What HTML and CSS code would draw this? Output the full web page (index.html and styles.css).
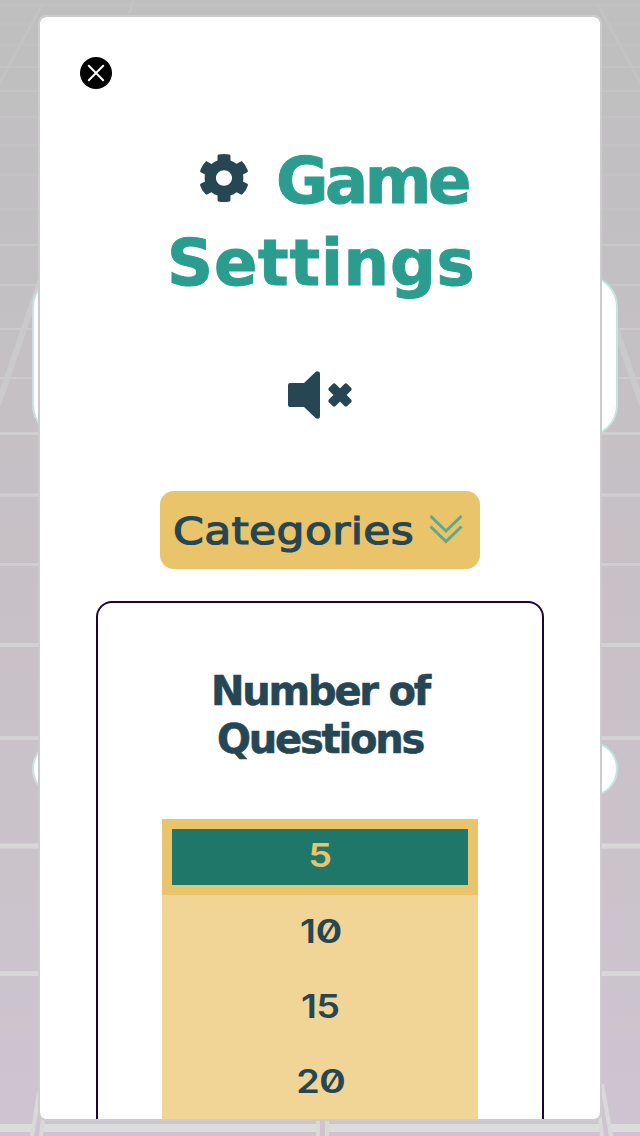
FILE: index.html
```html
<!DOCTYPE html>
<html lang="en">
<head>
<meta charset="utf-8">
<title>Game Settings</title>
<link rel="stylesheet" href="styles.css">
</head>
<body>
<svg class="backdrop" viewBox="0 0 640 1136" aria-hidden="true">
  <defs>
    <linearGradient id="sky" x1="0" y1="0" x2="0" y2="1">
      <stop offset="0" stop-color="#bebfbe"/><stop offset=".1" stop-color="#c1bfc1"/><stop offset=".25" stop-color="#c3c0c3"/>
      <stop offset=".6" stop-color="#c8c1c7"/><stop offset=".85" stop-color="#cbc4cc"/><stop offset="1" stop-color="#cfc3d1"/>
    </linearGradient>
  </defs>
  <rect width="640" height="1136" fill="url(#sky)"/>
  <g fill="none" stroke="#c4c3c4" stroke-width="2">
    <path stroke="#c1c1c1" d="M0 5H640M0 24H640M0 45H640"/>
    <path d="M0 67H640M0 91H640M0 117H640M0 145H640M0 175H640M0 209H640"/>
    <path stroke="#c8c7c8" d="M0 245H640M0 285H640"/>
    <path stroke="#c2c4c3" stroke-width="3" d="M43 3L-2 86M597 3L642 86M133 0L128 18"/>
    <path stroke="#cccbcc" d="M0 329H640M0 378H640"/>
    <path stroke="#cacaca" stroke-width="6" d="M43 273L-2 405M597 273L642 405"/>
    <path stroke="#cfcfcf" stroke-width="3" d="M0 433.500H640M0 495H640M0 564.500H640"/>
    <path stroke="#d3d2d3" stroke-width="4" d="M0 645H640M0 738H640"/>
    <path stroke="#d8d7d8" stroke-width="5" d="M0 846H640M0 973.500H640"/>
    <path stroke="#dcdcdc" stroke-width="8" d="M0 1128H32M42 1128H317M327 1128H601M611 1128H640"/>
    <path stroke="#dad9da" stroke-width="4" d="M39 1092L32 1136M44 1110L41 1136M318 1121V1136M327 1121V1136M599 1110L602 1136M602 1084L611 1136"/>
  </g>
  <g fill="#fff" stroke="#c5e3df" stroke-width="2">
    <rect x="33" y="276" width="584" height="160" rx="31"/>
    <rect x="33" y="742" width="584" height="54" rx="27"/>
  </g>
</svg>
<main class="modal">
  <button class="close" aria-label="Close">
    <svg viewBox="0 0 32 32"><circle cx="16" cy="16" r="16"/><path d="M8.800 8.800L23.200 23.200M23.200 8.800L8.800 23.200" stroke="#fff" stroke-width="2" stroke-linecap="round"/></svg>
  </button>
  <h1 class="title">
    <span class="title-row">
      <svg class="gear" viewBox="18 8 476 496" preserveAspectRatio="none"><path d="M487.400 315.700l-42.600-24.600c4.300-23.200 4.300-47 0-70.200l42.600-24.600c4.900-2.800 7.100-8.600 5.500-14-11.100-35.600-30-67.800-54.700-94.600-3.800-4.100-10-5.100-14.800-2.300L380.800 110c-17.900-15.400-38.500-27.300-60.800-35.100V25.800c0-5.600-3.900-10.500-9.400-11.700-36.700-8.200-74.300-7.800-109.200 0-5.500 1.200-9.400 6.100-9.400 11.700V75c-22.200 7.900-42.800 19.800-60.800 35.100L88.700 85.500c-4.900-2.800-11-1.900-14.800 2.300-24.700 26.700-43.600 58.900-54.700 94.600-1.700 5.400.6 11.200 5.500 14L67.300 221c-4.300 23.200-4.300 47 0 70.200l-42.600 24.600c-4.900 2.800-7.100 8.600-5.500 14 11.100 35.600 30 67.800 54.700 94.600 3.800 4.100 10 5.100 14.800 2.300l42.600-24.600c17.900 15.400 38.500 27.300 60.800 35.100v49.200c0 5.600 3.900 10.500 9.400 11.700 36.700 8.200 74.300 7.800 109.200 0 5.500-1.200 9.400-6.100 9.400-11.700v-49.200c22.200-7.900 42.800-19.800 60.800-35.100l42.600 24.600c4.900 2.800 11 1.900 14.800-2.300 24.700-26.700 43.600-58.900 54.700-94.600 1.500-5.500-.7-11.300-5.600-14.100zM256 336c-44.100 0-80-35.900-80-80s35.900-80 80-80 80 35.900 80 80-35.900 80-80 80z"/></svg>
      <span class="game">Game</span>
    </span>
    <span class="settings">Settings</span>
  </h1>
  <button class="mute" aria-label="Sound off">
    <svg viewBox="0 0 64 48"><path d="M2 12H16L27.500 .9Q29 -.4 31 .7Q32 1.300 32 3V45Q32 46.700 31 47.300Q29 48.400 27.500 47.100L16 36H2Q0 36 0 34V14Q0 12 2 12Z"/><g transform="translate(52 24) rotate(45)"><rect x="-13" y="-4.700" width="26" height="9.400" rx="2"/><rect x="-4.700" y="-13" width="9.400" height="26" rx="2"/></g></svg>
  </button>
  <button class="categories">
    <span class="label">Categories</span>
    <svg viewBox="0 0 34 30"><path d="M1.500 2L17 17L32.500 2M1.500 12.500L17 27.500L32.500 12.500"/></svg>
  </button>
  <section class="panel">
    <h2 class="heading">Number of<br>Questions</h2>
    <ul class="options">
      <li class="option selected"><span class="digits">5</span></li>
      <li class="option"><span class="digits">1<span class="zero">0</span></span></li>
      <li class="option"><span class="digits">15</span></li>
      <li class="option"><span class="digits">2<span class="zero">0</span></span></li>
    </ul>
  </section>
</main>
</body>
</html>
```
FILE: styles.css
```css
* { box-sizing: border-box; }
body {
  margin: 0;
  height: 1136px;
  padding: 15px 38px;
  overflow: hidden;
  color: #264653;
  font-family: "DejaVu Sans", sans-serif;
}
button { border: 0; padding: 0; background: none; color: inherit; font: inherit; }
svg { display: block; }
.backdrop { position: absolute; inset: 0; width: 640px; height: 1136px; }
.modal {
  position: relative;
  display: flex;
  flex-direction: column;
  align-items: center;
  height: 1106px;
  padding-top: 40px;
  overflow: hidden;
  background: #fff;
  background-clip: padding-box;
  border: 2px solid #ccc;
  border-radius: 8px;
}
.close { align-self: flex-start; flex: none; width: 32px; height: 32px; margin-left: 40px; }
.title {
  flex: none;
  align-self: stretch;
  margin: 51px 0 0;
  font-size: 64px;
  line-height: 82px;
  color: #2a9d8f;
  -webkit-text-stroke: 1px #2a9d8f;
}
.title-row { display: flex; align-items: center; gap: 28px; height: 82px; padding-left: 160px; }
.gear { width: 48px; height: 48px; margin-top: -6px; fill: #264653; }
.game { letter-spacing: -3.5px; }
.settings { display: block; padding-left: 127px; letter-spacing: .8px; }
.mute { flex: none; width: 64px; height: 48px; margin-top: 67px; }
.mute svg { fill: #264653; overflow: visible; }
.categories {
  flex: none;
  display: flex;
  align-items: center;
  width: 320px;
  height: 78px;
  margin-top: 72px;
  padding-left: 13px;
  background: #e9c46a;
  border-radius: 14px;
  font-size: 38px;
  line-height: 78px;
  -webkit-text-stroke: 1.2px #264653;
}
.label {
  width: 256px;
  padding-top: 2px;
  text-align: left;
  letter-spacing: .3px;
  transform: scaleX(1.16);
  transform-origin: left;
}
.categories svg { width: 34px; height: 30px; margin-top: -3px; fill: none; stroke: #5ea98a; stroke-width: 3; }
.panel {
  flex: none;
  width: 448px;
  height: 620px;
  margin-top: 32px;
  padding-top: 64px;
  border: 2px solid #1b0536;
  border-radius: 16px;
}
.heading {
  margin: 0;
  font-size: 40px;
  line-height: 48px;
  letter-spacing: -2.200px;
  text-align: center;
  -webkit-text-stroke: .6px #264653;
}
.options {
  width: 316px;
  margin: 56px auto 0;
  padding: 0;
  list-style: none;
  background: #f0d596;
}
.option {
  height: 75px;
  line-height: 73px;
  font-family: Inter, sans-serif;
  font-size: 32px;
  font-weight: 600;
  font-feature-settings: "zero" 1;
  text-align: center;
}
.selected {
  height: 76px;
  line-height: 54px;
  color: #e9c46a;
  background: #1f776a;
  border: 10px solid #e9c46a;
}
.digits { display: inline-block; transform: scaleX(1.18); letter-spacing: -.8px; }
.zero { display: inline-block; margin-left: 1px; transform: scaleX(1.08); }
```
